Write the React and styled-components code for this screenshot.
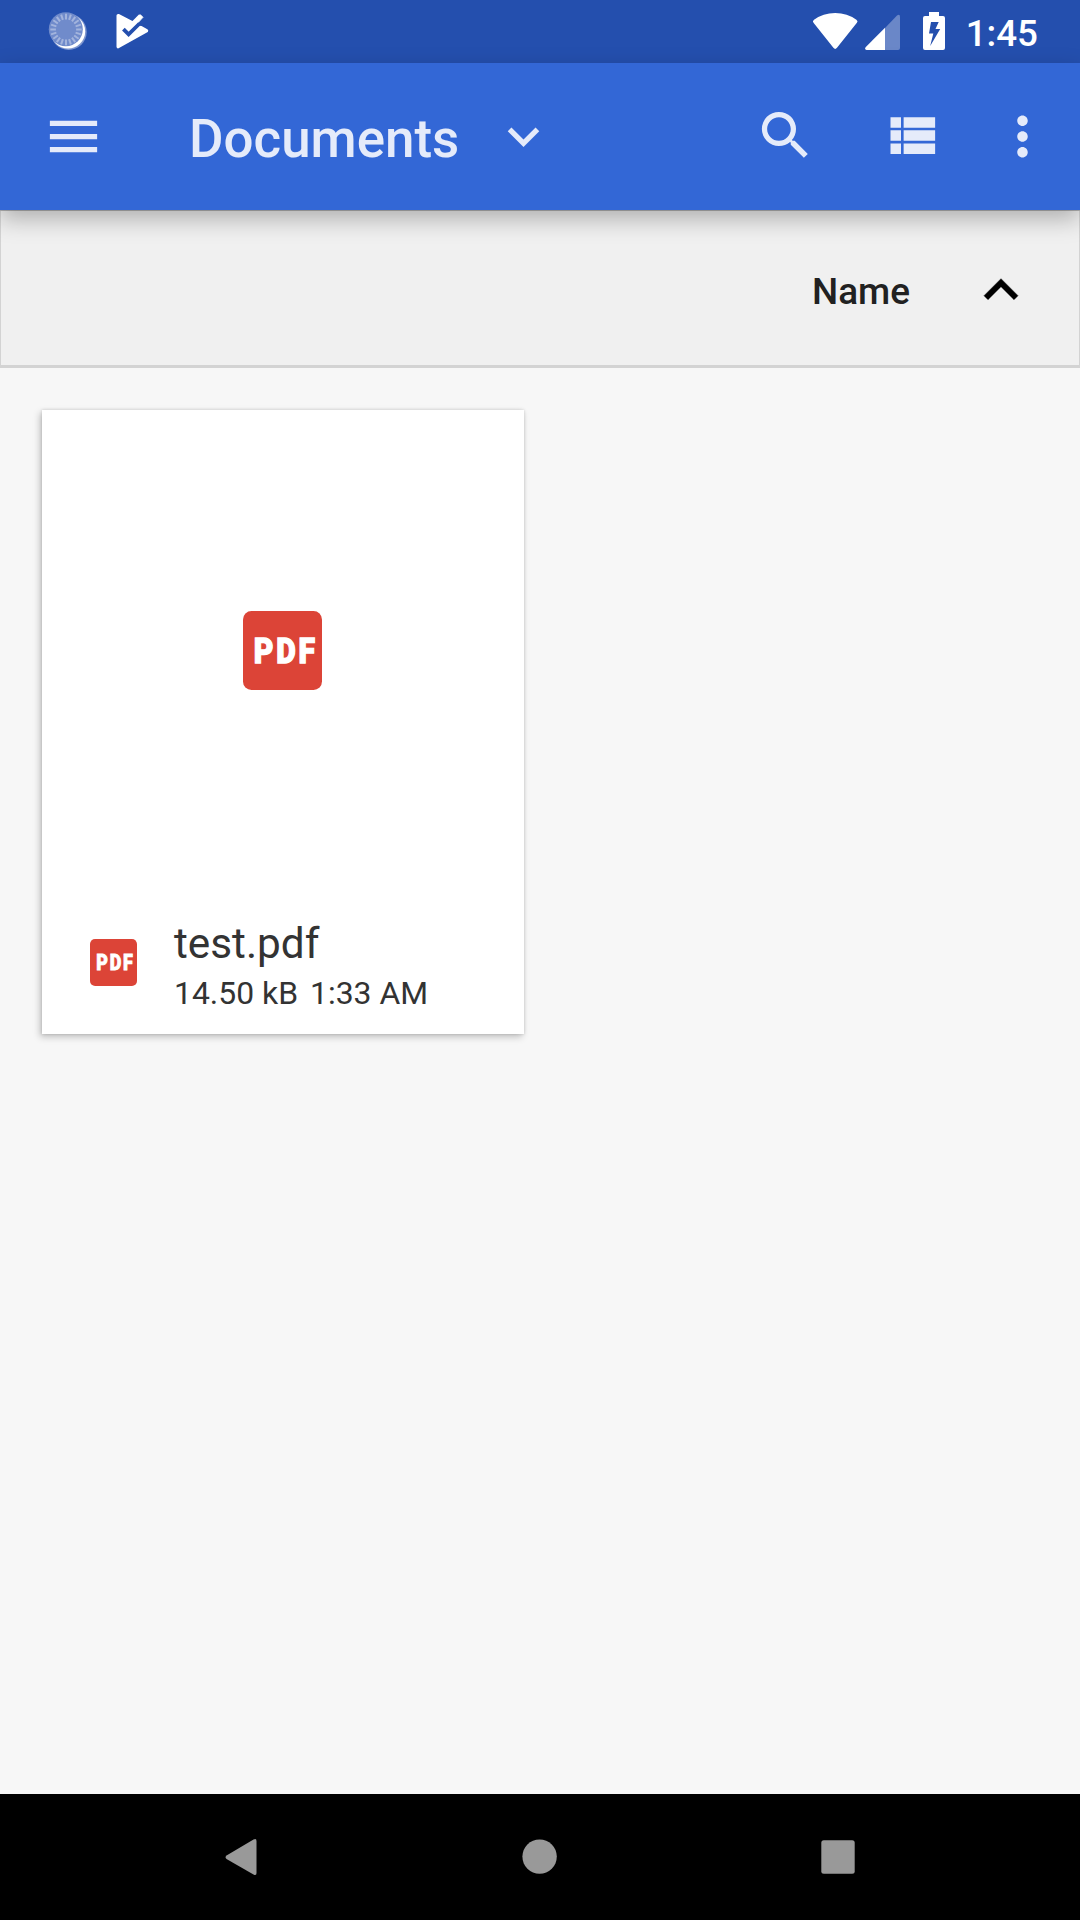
import React from "react";
import styled, { createGlobalStyle } from "styled-components";

const GlobalStyle = createGlobalStyle`
  * { box-sizing: border-box; }
  body { margin: 0; background: #f7f7f7; font-family: Roboto, "Noto Sans", sans-serif; }
  svg { display: block; flex: none; }
`;

const Screen = styled.div`
  display: flex;
  flex-direction: column;
  width: 1080px;
  height: 1920px;
  overflow: hidden;
  background: #f7f7f7;
`;

const StatusBar = styled.header`
  display: flex;
  align-items: center;
  justify-content: space-between;
  flex: none;
  height: 63px;
  padding: 0 42px 0 48px;
  background: #244fae;
  color: #fff;
`;

const StatusGroup = styled.div`
  display: flex;
  align-items: center;
  height: 63px;
`;

const Clock = styled.time`
  margin-left: 20px;
  font-size: 36.75px;
  font-weight: 500;
  line-height: 44px;
  padding-top: 4px;
`;

const Toolbar = styled.nav`
  position: relative;
  z-index: 1;
  display: flex;
  align-items: center;
  flex: none;
  height: 147px;
  padding: 0 26px 0 42px;
  background: #3367d6;
  color: #e5ebfa;
  box-shadow: 0 1px 0 rgba(0, 0, 0, 0.15), 0 9px 22px rgba(0, 0, 0, 0.27);
`;

const IconButton = styled.button`
  display: flex;
  width: 63px;
  height: 63px;
  padding: 0;
  border: 0;
  background: none;
  color: inherit;
  margin-left: ${(p) => p.$gap || 0}px;
  margin-top: ${(p) => p.$lift || 0}px;
`;

const Title = styled.h1`
  width: 269px;
  margin: 4px 0 0 84px;
  font-size: 52.9px;
  font-weight: 500;
  line-height: 62px;
  white-space: nowrap;
`;

const Spacer = styled.div`
  flex: 1;
`;

const SortBar = styled.section`
  display: flex;
  align-items: center;
  justify-content: flex-end;
  flex: none;
  height: 158px;
  padding: 3px 44px 0 0;
  background: #f0f0f0;
  border: 1px solid #d3d3d3;
  border-bottom-width: 3px;
`;

const SortLabel = styled.span`
  font-size: 36.9px;
  font-weight: 500;
  line-height: 44px;
  color: #212121;
  margin: 4px 57px 0 0;
`;

const Content = styled.main`
  flex: 1;
  padding: 42px;
`;

const Card = styled.article`
  display: flex;
  flex-direction: column;
  width: 482px;
  height: 624px;
  background: #fff;
  box-shadow: 0 0 3px rgba(0, 0, 0, 0.16), -2px 3px 7px rgba(0, 0, 0, 0.22);
`;

const Preview = styled.div`
  display: flex;
  align-items: center;
  justify-content: center;
  height: 481px;
  padding-right: 1px;
`;

const Details = styled.div`
  display: flex;
  align-items: flex-start;
  padding: 28px 0 0 48px;
  gap: 37px;
  color: #333;
`;

const FileType = styled.div`
  padding-top: 20px;
`;

const FileName = styled.div`
  font-size: 42.3px;
  line-height: 50px;
`;

const FileMeta = styled.div`
  display: flex;
  gap: 12px;
  margin-top: 5px;
  font-size: 31.9px;
  line-height: 38px;
`;

const NavigationBar = styled.footer`
  display: flex;
  align-items: center;
  justify-content: space-between;
  flex: none;
  height: 126px;
  padding: 0 225px;
  background: #000;
  color: #999;
`;

function Icon({ path, size = 63, weight = 0 }) {
  return (
    <svg width={size} height={size} viewBox="0 0 24 24" fill="currentColor" stroke="currentColor" strokeWidth={weight}>
      <path d={path} />
    </svg>
  );
}

const icons = {
  menu: "M3 18h18v-2H3v2zm0-5h18v-2H3v2zm0-7v2h18V6H3z",
  expandMore: "M16.59 8.59 12 13.17 7.41 8.59 6 10l6 6 6-6z",
  expandLess: "m12 8-6 6 1.41 1.41L12 10.83l4.59 4.58L18 14z",
  search:
    "M15.5 14h-.79l-.28-.27A6.471 6.471 0 0 0 16 9.5 6.5 6.5 0 1 0 9.5 16c1.61 0 3.09-.59 4.23-1.57l.27.28v.79l5 4.99L20.49 19l-4.99-5zm-6 0C7.01 14 5 11.99 5 9.5S7.01 5 9.5 5 14 7.01 14 9.5 11.99 14 9.5 14z",
  list: "M4 14h4v-4H4v4zm0 5h4v-4H4v4zM4 9h4V5H4v4zm5 5h12v-4H9v4zm0 5h12v-4H9v4zM9 5v4h12V5H9z",
  more: "M12 8c1.1 0 2-.9 2-2s-.9-2-2-2-2 .9-2 2 .9 2 2 2zm0 2c-1.1 0-2 .9-2 2s.9 2 2 2 2-.9 2-2-.9-2-2-2zm0 6c-1.1 0-2 .9-2 2s.9 2 2 2 2-.9 2-2-.9-2-2-2z",
};

function SyncIcon() {
  const ticks = Array.from({ length: 20 }, (_, i) => i * 18);
  return (
    <svg width="40" height="63" viewBox="0 0 40 63">
      <circle cx="20.7" cy="31.9" r="18" fill="#7e96cf" />
      <circle cx="20" cy="31.4" r="17.2" fill="#fff" />
      <circle cx="17.8" cy="29.3" r="17" fill="#708bcb" />
      <g stroke="#a3b4dd" strokeWidth="2">
        {ticks.map((a) => (
          <line key={a} x1="18" y1="13.8" x2="18" y2="19.4" transform={`rotate(${a} 18 29.5)`} />
        ))}
      </g>
    </svg>
  );
}

function PlayCheckIcon() {
  return (
    <svg width="60" height="63" viewBox="88 0 60 63" overflow="visible">
      <path
        d="M118.2 15.6 L134.5 24 L146.5 30.8 L118.2 46.6 Z"
        fill="#fff" stroke="#fff" strokeWidth="3.4" strokeLinejoin="round"
      />
      <path d="M134.2 21.8 L141 13 L150 17 L142.8 26 L137.5 25.5Z" fill="#244fae" />
      <path d="M131 23.8 L140.4 14.7 L143 17.3 L134.8 26.2Z" fill="#fff" stroke="#fff" strokeWidth="0.8" />
      <path d="M123.4 29.2 L128.6 34.4 L139.6 23.5" fill="none" stroke="#244fae" strokeWidth="3.8" />
      <path d="M128.5 27.8 L140.6 15.7" fill="none" stroke="#fff" strokeWidth="4" />
    </svg>
  );
}

function StatusIcons() {
  return (
    <svg width="134" height="63" viewBox="812 0 134 63" fill="#fff">
      <path d="M813.5 22.8 Q812 21.2 814 19.8 Q823 13 835.2 13 Q847.4 13 856.4 19.8 Q858.4 21.2 856.9 22.8 L837 47.8 Q835.2 50 833.4 47.8Z" />
      <path d="M885 28 L897 15.6 Q900 13.6 900 17 V48 Q900 50 898 50 H885Z" opacity="0.32" />
      <path d="M885 27.8 V50 H866.5 Q864 49 865.8 47Z" />
      <path fillRule="evenodd" d="M929 12h10v4h4q2 0 2 2v30q0 2-2 2h-18q-2 0-2-2V18q0-2 2-2h4z M931 22l-2 11.5h4.3L930.2 46 940.2 29h-4.7l3.2-7z" />
    </svg>
  );
}

function PdfIcon({ size }) {
  return (
    <svg width={size} height={size} viewBox="0 0 79 79">
      <rect width="79" height="79" rx="8.5" fill="#dc4437" />
      <text
        x="12.7 39.6 66" y="52.4" transform="scale(.84 1)"
        fill="#fff" stroke="#fff" strokeWidth="1.3" strokeLinejoin="miter"
        fontFamily="Roboto, sans-serif" fontWeight="900" fontSize="36"
      >
        PDF
      </text>
    </svg>
  );
}

export default function App() {
  return (
    <Screen>
      <GlobalStyle />
      <StatusBar>
        <StatusGroup>
          <SyncIcon />
          <PlayCheckIcon />
        </StatusGroup>
        <StatusGroup>
          <StatusIcons />
          <Clock>1:45</Clock>
        </StatusGroup>
      </StatusBar>
      <Toolbar>
        <IconButton aria-label="Menu"><Icon path={icons.menu} /></IconButton>
        <Title>Documents</Title>
        <IconButton aria-label="Choose folder" $gap={34}><Icon path={icons.expandMore} /></IconButton>
        <Spacer />
        <IconButton aria-label="Search" $lift={-2}><Icon path={icons.search} /></IconButton>
        <IconButton aria-label="List view" $gap={63} $lift={-2}><Icon path={icons.list} /></IconButton>
        <IconButton aria-label="More options" $gap={48}><Icon path={icons.more} /></IconButton>
      </Toolbar>
      <SortBar>
        <SortLabel>Name</SortLabel>
        <Icon path={icons.expandLess} size={68} weight={0.15} />
      </SortBar>
      <Content>
        <Card>
          <Preview><PdfIcon size={79} /></Preview>
          <Details>
            <FileType><PdfIcon size={47} /></FileType>
            <div>
              <FileName>test.pdf</FileName>
              <FileMeta><span>14.50 kB</span><span>1:33 AM</span></FileMeta>
            </div>
          </Details>
        </Card>
      </Content>
      <NavigationBar>
        <svg width="33" height="40" viewBox="0 0 33 40" fill="currentColor">
          <path d="M1.5 18.5 L28.5 2.5 Q31.5 1 31.5 4 V36 Q31.5 39 28.5 37.4 L1.5 22 Q-.5 20.3 1.5 18.5Z" />
        </svg>
        <svg width="36" height="36" viewBox="0 0 36 36" fill="currentColor">
          <circle cx="17.6" cy="17.6" r="17.2" />
        </svg>
        <svg width="34" height="34" viewBox="0 0 34 34" fill="currentColor">
          <rect x=".3" y=".3" width="33.4" height="33.4" rx="2.5" />
        </svg>
      </NavigationBar>
    </Screen>
  );
}
